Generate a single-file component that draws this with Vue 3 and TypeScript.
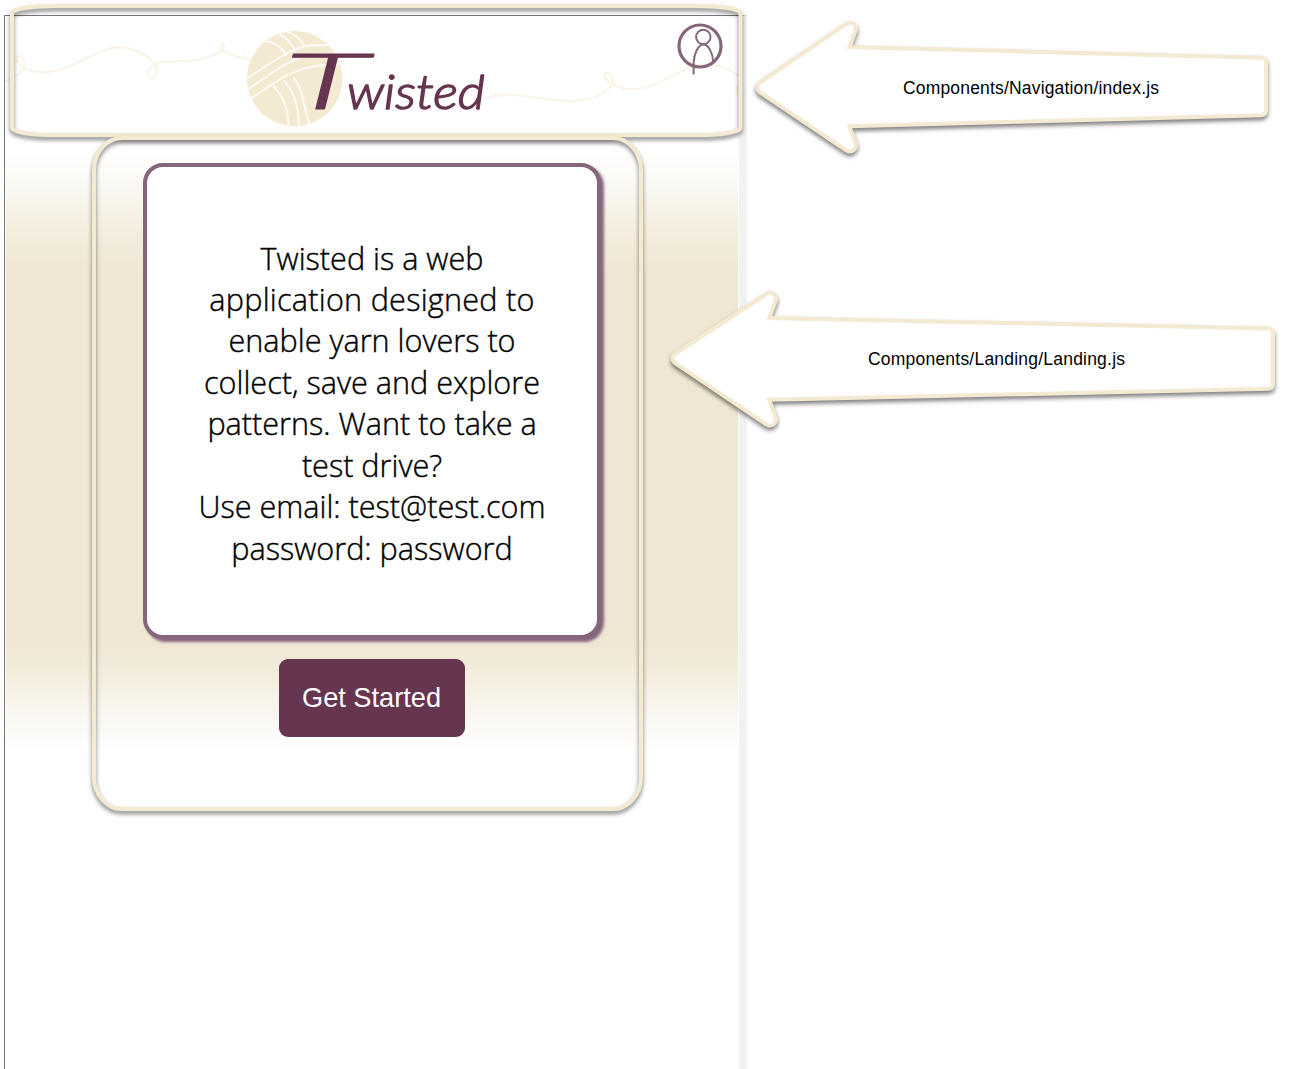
<script setup lang="ts">
interface Callout {
  label: string
  path: string
  x: number
  y: number
  width: number
}

const callouts: Callout[] = [
  {
    label: 'Components/Navigation/index.js',
    path: 'M760 82.5 L846.5 23.8 C851 20.6 857.6 25 855.6 30.5 L849.5 47 L1261 57.7 Q1266 58 1266 63 V110 Q1266 115 1261 115.2 L849.5 126.3 L855.6 143.5 C857.5 149 851.5 153.5 846.5 150.5 L760 92.5 Q754.5 87.5 760 82.5Z',
    x: 903, y: 94, width: 256,
  },
  {
    label: 'Components/Landing/Landing.js',
    path: 'M675.5 353.5 L766.5 294 C771 290.8 777.6 295 775.5 301 L769.3 318 L1268 328.5 Q1273 328.8 1273 333.5 V384 Q1273 388.6 1268 388.8 L769.3 399.7 L775.5 417.5 C777.5 423 771.5 427.5 766.5 424.5 L675.5 363.5 Q669.5 358.5 675.5 353.5Z',
    x: 868, y: 365, width: 257,
  },
]

const intro: string[] = [
  'Twisted is a web',
  'application designed to',
  'enable yarn lovers to',
  'collect, save and explore',
  'patterns. Want to take a',
  'test drive?',
  'Use email: test@test.com',
  'password: password',
]
</script>

<template>
  <div class="board">
    <div class="app">
      <header class="nav">
        <svg class="banner" width="733" height="121" viewBox="5 16 733 121">
          <g class="yarn">
            <path d="M18 243 C45 232 75 212 74 188 C72 166 50 164 49 174 C50 190 73 217 127 217 C222 216 284 142 356 142 C404 142 450 169 467 196 C477 217 463 235 453 234 C439 232 441 215 449 207 C477 177 524 187 571 183 C612 179 645 166 668 150 C678 130 665 124 662 137 C659 151 690 168 755 180" transform="scale(.33333)" />
            <path d="M20 294 C95 269 182 303 274 303 C350 301 397 270 398 243 C397 217 372 213 373 224 C376 238 402 268 455 268 C546 266 606 193 676 192 C718 193 754 211 774 227 M774 257 C768 267 768 275 774 284" transform="translate(480 0) scale(.33333)" />
          </g>
          <g transform="translate(230 10) scale(.33333)">
            <circle class="ball" cx="194" cy="206" r="143" />
            <path class="strand" d="M50 206 C115 165 170 121 224 109 Q260 103 305 106 M55 237 C120 196 158 157 225 139 Q275 128 319 134 M62 265 C115 235 155 193 225 175 Q285 161 330 163 M108 93 C140 99 159 114 168 137 M149 73 C174 86 188 104 196 124 M173 66 C199 76 216 91 226 111 M129 226 C164 262 176 300 175 350 M161 211 C193 246 207 290 207 348 M190 202 C224 238 217 292 239 342" />
          </g>
          <text class="wordmark initial" x="284" y="109" textLength="84" lengthAdjust="spacingAndGlyphs">T</text>
          <text class="wordmark" x="347" y="109" textLength="138" lengthAdjust="spacingAndGlyphs">wisted</text>
          <g class="user">
            <circle cx="700" cy="46" r="21" stroke-width="3.2" />
            <circle cx="703.3" cy="37" r="7.2" stroke-width="2" />
            <path d="M693.6 74.5 V63 C694 53 698.5 44.5 703.4 44.5 C708.5 44.5 712.8 53 713.2 62" stroke-width="2" />
          </g>
        </svg>
      </header>
      <main class="landing">
        <section class="card">
          <p class="intro">
            <span v-for="line in intro" :key="line">{{ line }}</span>
          </p>
        </section>
        <button class="start">Get Started</button>
      </main>
    </div>

    <svg class="notes" width="1315" height="1069" viewBox="0 0 1315 1069">
      <rect class="frame" x="12" y="6" width="728.5" height="129" rx="42" ry="7" />
      <rect class="frame" x="94" y="138" width="547" height="671" rx="28" ry="32" />
      <g v-for="note in callouts" :key="note.label">
        <path class="arrow" :d="note.path" />
        <text class="label" :x="note.x" :y="note.y" :textLength="note.width">{{ note.label }}</text>
      </g>
    </svg>
  </div>
</template>

<style>
body { background: #fff; }
</style>

<style scoped>
.board {
  position: relative;
  width: 1315px;
  height: 1069px;
  overflow: hidden;
}
.app {
  box-sizing: border-box;
  width: 743px;
  height: 1054px;
  margin: 15px 0 0 4px;
  border-top: 1px solid #777;
  border-left: 1px solid #777;
  border-right: 8px solid #f2f2f2;
  display: flex;
  flex-direction: column;
}
.nav { height: 121px; }
.banner { display: block; }
.yarn { fill: none; stroke: #faf4e8; stroke-width: 6.5; stroke-linecap: round; }
.ball { fill: #f4ead2; }
.strand { fill: none; stroke: #fffdf9; stroke-width: 5.5; }
.wordmark {
  font-family: Lato, "Liberation Sans", sans-serif;
  font-style: italic;
  font-weight: 300;
  font-size: 48px;
  fill: #66354f;
  stroke: #66354f;
  stroke-width: 1.5;
  stroke-linejoin: round;
}
.initial { font-size: 77px; font-weight: 300; stroke-width: 1; }
.user { fill: none; stroke: #85677c; stroke-linecap: butt; }
.landing {
  display: flex;
  flex-direction: column;
  align-items: center;
  gap: 19.2px;
  box-sizing: border-box;
  height: 617px;
  margin: 0 1px;
  padding-top: 26.4px;
  background: linear-gradient(#fff 2%, #f9f7ef 9%, #f4ecdc 16%, #efe7d3 22%, #efe7d3 81%, #f4ecdc 87%, #f9f6ef 93%, #fff 100%);
}
.card {
  box-sizing: border-box;
  width: 458.6px;
  height: 476px;
  flex: none;
  border: 4px solid #85667b;
  border-radius: 20px;
  background: #fff;
  box-shadow: 3px 3px 3px #85667b;
  display: flex;
  align-items: center;
  justify-content: center;
}
.intro {
  margin: 0;
  padding-top: 4px;
  font: 300 30.6px/41.45px "Open Sans", "Noto Sans", sans-serif;
  color: #000;
  -webkit-text-stroke: .4px #000;
  text-align: center;
}
.intro span { display: block; white-space: nowrap; }
.intro span:nth-child(2) { letter-spacing: .25px; }
.start {
  width: 186px;
  height: 78px;
  padding: 0 1px 0 0;
  border: 0;
  border-radius: 9px;
  background: #66354f;
  color: #fff;
  font: 27.2px "Liberation Sans", sans-serif;
}
.notes {
  position: absolute;
  top: 0;
  left: 0;
}
.frame, .arrow {
  stroke: #f4ead2;
  stroke-width: 4;
  filter: drop-shadow(0 3px 2px rgba(0, 0, 0, .5));
}
.frame { fill: none; }
.arrow { fill: #fff; }
.label { font: 17.5px "Liberation Sans", sans-serif; fill: #000; }
</style>
